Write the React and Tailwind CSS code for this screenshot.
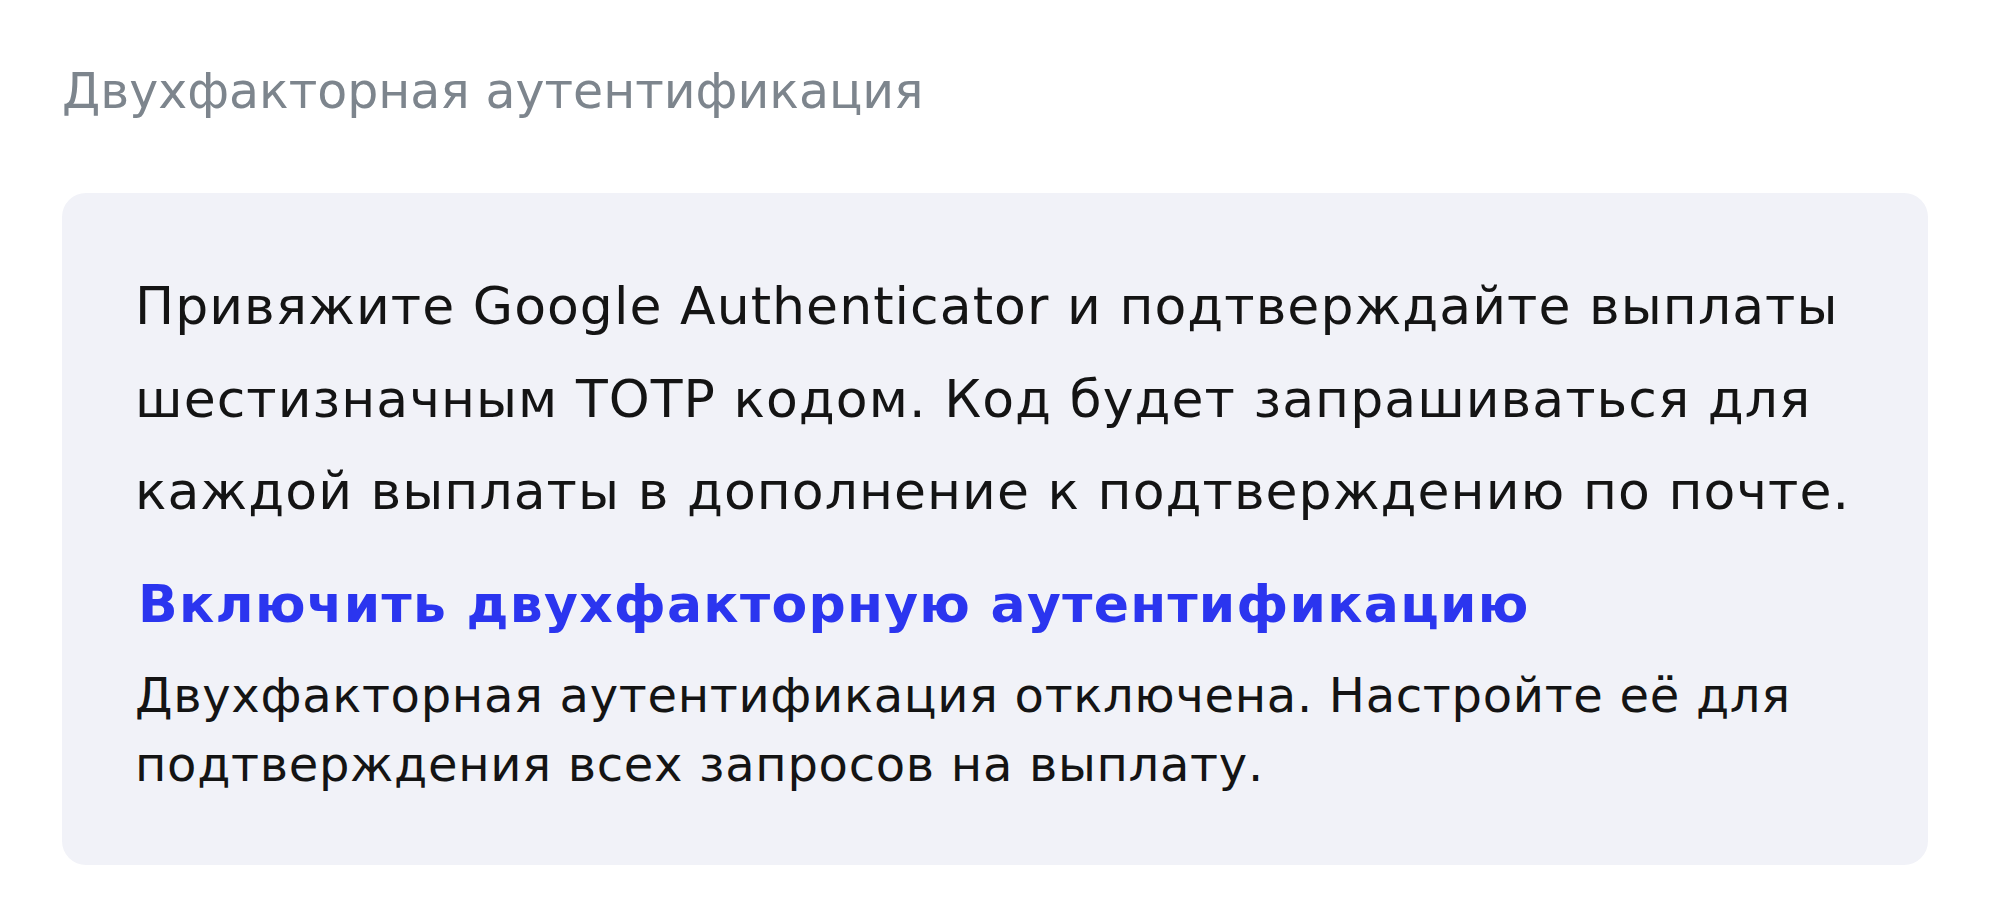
export default function App() {
    return (
        <div className="min-h-screen bg-white pt-[62px] pl-[62px] pr-[72px] font-['DejaVu_Sans',sans-serif]">
            <h2 className="text-[49px] leading-[60px] text-[#7d858d]">
                Двухфакторная аутентификация
            </h2>

            {/* 2FA card */}
            <div className="mt-[71px] w-[1866px] rounded-[24px] bg-[#f1f2f8] pl-[73px] pr-[50px] pt-[67px] pb-[66px]">
                <p className="text-[52px] leading-[92.5px] tracking-[1.05px] text-[#141414]">
                    Привяжите Google Authenticator и подтверждайте выплаты шестизначным TOTP кодом. Код будет запрашиваться для каждой выплаты в дополнение к подтверждению по почте.
                </p>
                <a href="#" className="mt-[35px] block pl-[3px] text-[52px] font-bold leading-[62px] tracking-[1.3px] text-[#2b35ef]">
                    Включить двухфакторную аутентификацию
                </a>
                <p className="mt-[26px] text-[48px] leading-[69px] tracking-[0.7px] text-[#141414]">
                    Двухфакторная аутентификация отключена. Настройте её для подтверждения всех запросов на выплату.
                </p>
            </div>
        </div>
    );
}
